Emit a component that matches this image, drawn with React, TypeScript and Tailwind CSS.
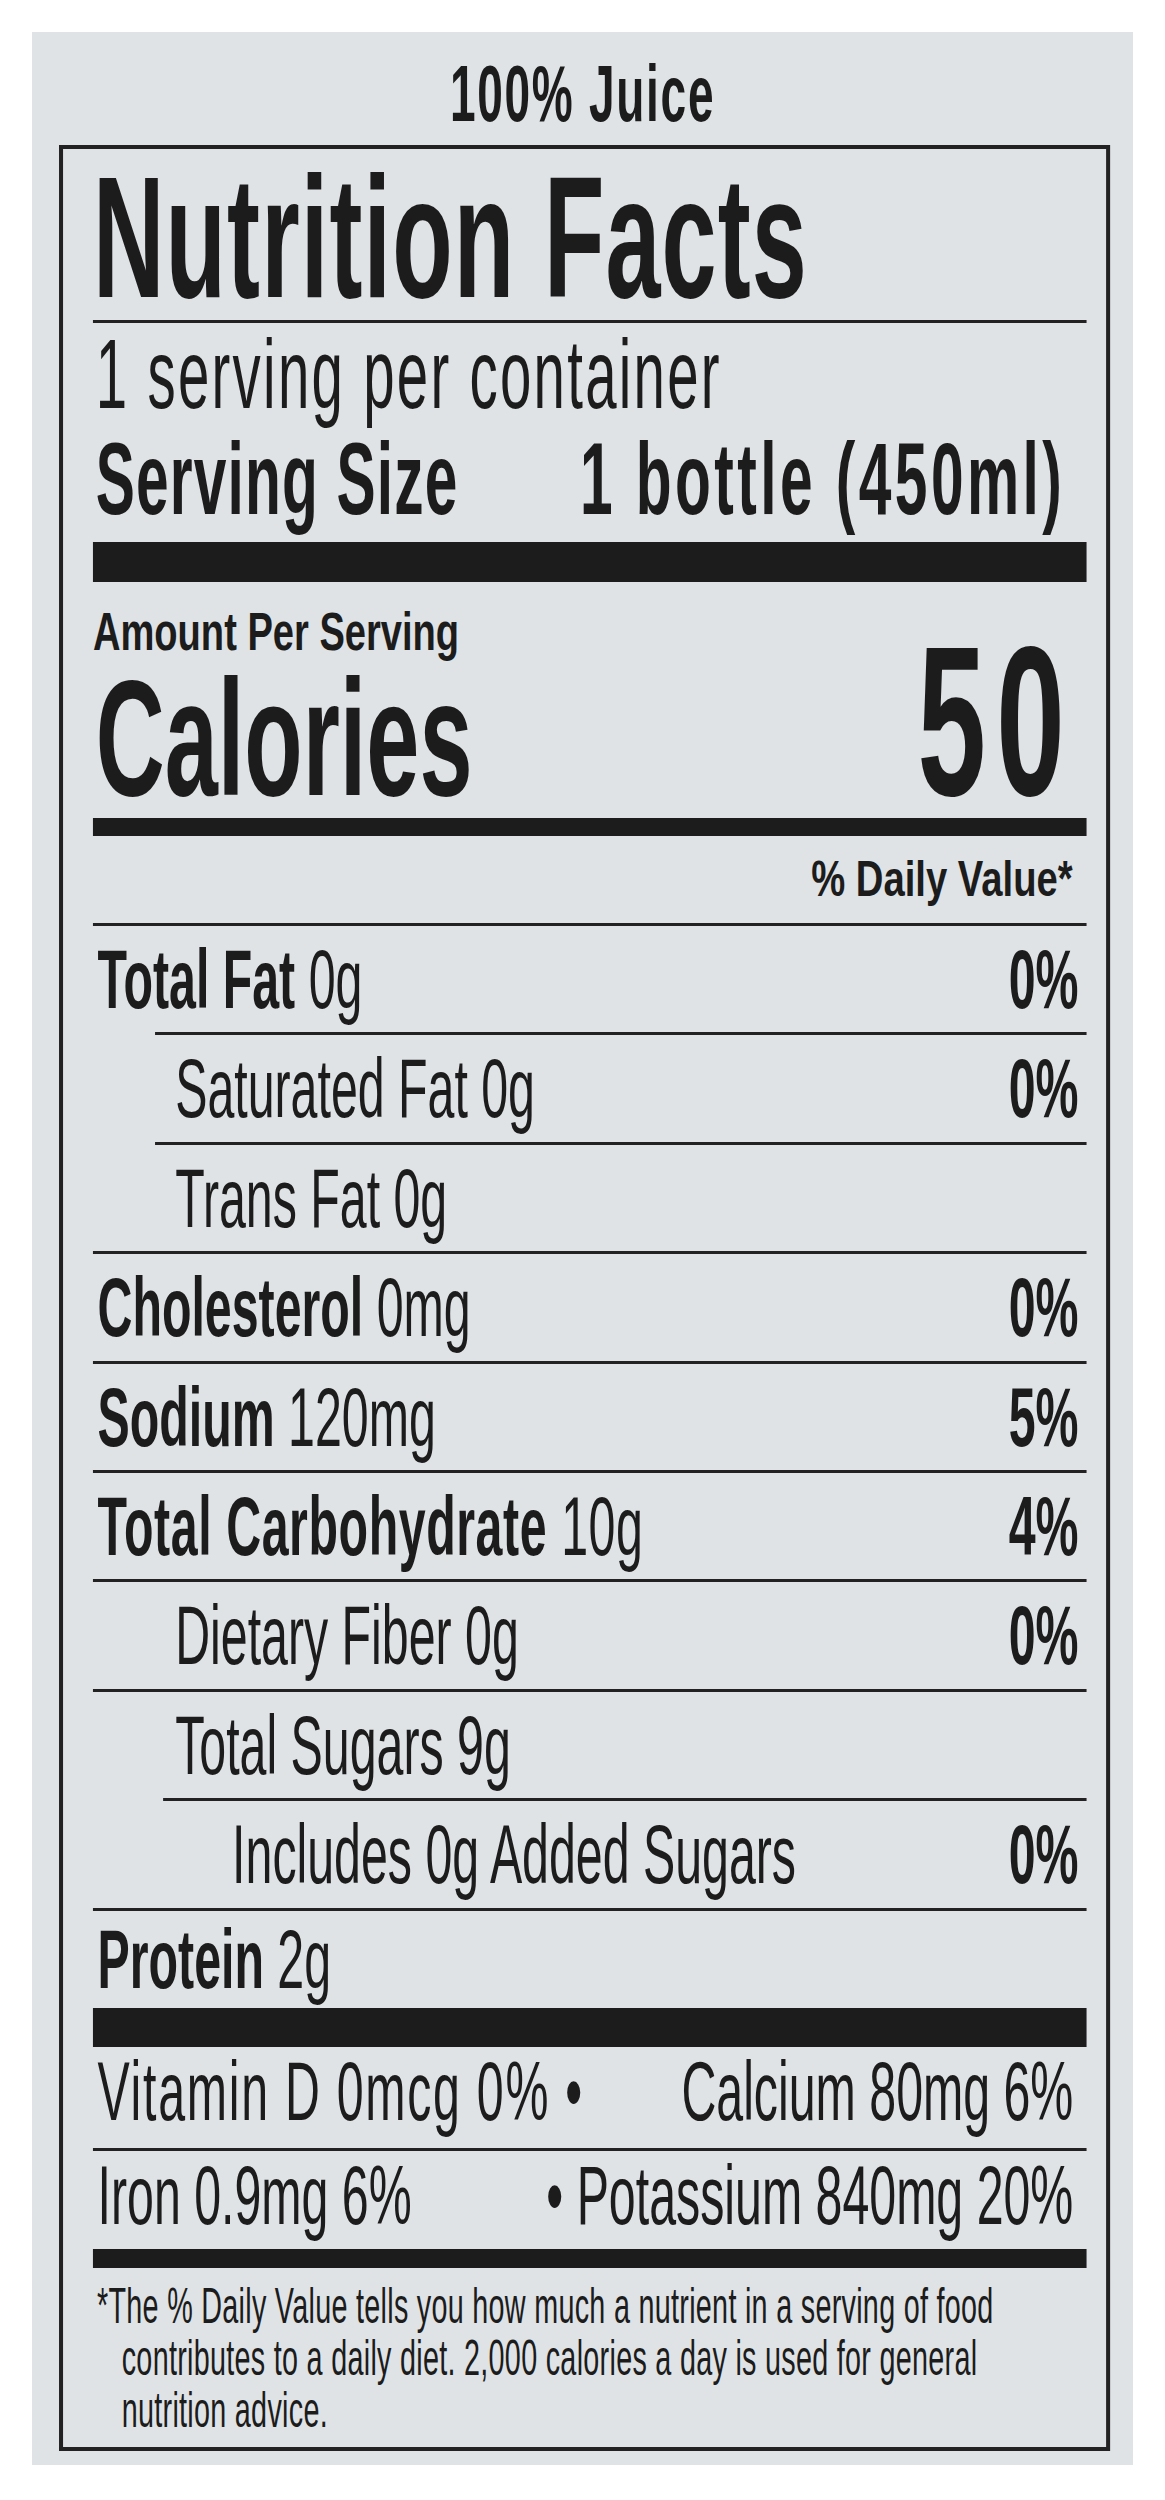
type Nutrient = {
  name: string;
  amount: string;
  dv?: string;
  bold?: boolean;
  ruleClass: string;
  textClass: string;
};

// horizontal values are in the un-squeezed space (x 0.575 on screen)
const nutrients: Nutrient[] = [
  { name: "Total Fat", amount: "0g", dv: "0%", bold: true, ruleClass: "", textClass: "pl-[8px]" },
  { name: "Saturated Fat", amount: "0g", dv: "0%", ruleClass: "ml-[108px]", textClass: "pl-[143px]" },
  { name: "Trans Fat", amount: "0g", ruleClass: "ml-[108px]", textClass: "pl-[143px]" },
  { name: "Cholesterol", amount: "0mg", dv: "0%", bold: true, ruleClass: "", textClass: "pl-[8px]" },
  { name: "Sodium", amount: "120mg", dv: "5%", bold: true, ruleClass: "", textClass: "pl-[8px]" },
  { name: "Total Carbohydrate", amount: "10g", dv: "4%", bold: true, ruleClass: "", textClass: "pl-[8px] tracking-[1px]" },
  { name: "Dietary Fiber", amount: "0g", dv: "0%", ruleClass: "", textClass: "pl-[143px]" },
  { name: "Total Sugars", amount: "9g", ruleClass: "", textClass: "pl-[143px]" },
  { name: "Includes 0g Added Sugars", amount: "", dv: "0%", ruleClass: "ml-[122px]", textClass: "pl-[242px]" },
];

function Rule({ className = "" }: { className?: string }) {
  return <div className={`h-[3px] bg-[#222222] ${className}`} />;
}

function NutrientRow({ n }: { n: Nutrient }) {
  return (
    <div>
      <Rule className={n.ruleClass} />
      <div
        className={`flex items-baseline justify-between whitespace-nowrap text-[84px] leading-[106.4px] ${n.textClass}`}
      >
        <span>
          {n.bold ? (
            <>
              <span className="font-bold">{n.name}</span> {n.amount}
            </>
          ) : (
            `${n.name} ${n.amount}`
          )}
        </span>
        {n.dv ? <span className="pr-[14px] font-bold tracking-normal">{n.dv}</span> : null}
      </div>
    </div>
  );
}

export default function App() {
  return (
    <div className="min-h-[2500px] bg-white px-[32px] pt-[32px]">
      <div className="w-[1101px] overflow-hidden bg-[#dfe3e6] text-[#1c1c1c]">
        {/* the label type is condensed: squeeze the whole panel horizontally */}
        <div className="w-[1915px] origin-top-left scale-x-[0.575] pt-[23px] pb-[14px] font-['Liberation_Sans',sans-serif]">
          <div className="text-center text-[80px] font-bold leading-[78px] tracking-[3px]">100% Juice</div>

          <div className="ml-[47px] mt-[12px] w-[1828px] border-x-[7px] border-y-[4px] border-[#222222] pl-[52px] pr-[34px] pb-[11px]">
            <h1 className="pt-[5px] text-[172px] font-bold leading-[166px] tracking-[2px] whitespace-nowrap">
              Nutrition Facts
            </h1>
            <Rule />
            <div className="pl-[5px] text-[98px] leading-[102px] tracking-[4px] whitespace-nowrap">
              1 serving per container
            </div>
            <div className="flex justify-between pl-[5px] pr-[37px] text-[102px] font-bold leading-[108px] whitespace-nowrap">
              <span className="tracking-[2px]">Serving Size</span>
              <span className="tracking-[6px]">1 bottle (450ml)</span>
            </div>
            <div className="mt-[9px] h-[40px] bg-[#1c1c1c]" />

            <div className="flex items-end justify-between whitespace-nowrap">
              <div className="flex flex-col">
                <span className="pt-[12px] text-[53px] font-bold leading-[76px]">
                  <span className="inline-block origin-left scale-x-[1.25]">Amount Per Serving</span>
                </span>
                <span className="pb-[12px] pl-[5px] text-[166px] font-bold leading-[136px]">
                  Calories
                </span>
              </div>
              <span className="pb-[22px] pr-[20px] text-[214px] font-bold leading-[150px] tracking-[18px]">
                50
              </span>
            </div>
            <div className="h-[18px] bg-[#1c1c1c]" />

            <div className="pr-[24px] text-right text-[50px] font-bold leading-[87px]">
              <span className="inline-block origin-right scale-x-[1.33]">% Daily Value*</span>
            </div>

            {nutrients.map((n) => (
              <NutrientRow key={n.name} n={n} />
            ))}

            <Rule />
            <div className="pl-[8px] text-[84px] leading-[97px] whitespace-nowrap">
              <span className="font-bold">Protein</span> 2g
            </div>
            <div className="h-[39px] bg-[#1c1c1c]" />

            <div className="flex justify-between pb-[13px] pl-[8px] pr-[23px] text-[84px] leading-[88px] whitespace-nowrap">
              <span className="tracking-[3px]">Vitamin D 0mcg 0% •</span>
              <span>Calcium 80mg 6%</span>
            </div>
            <Rule />
            <div className="flex justify-between pb-[10px] pl-[8px] pr-[23px] text-[84px] leading-[88px] whitespace-nowrap">
              <span>Iron 0.9mg 6%</span>
              <span>• Potassium 840mg 20%</span>
            </div>
            <div className="h-[19px] bg-[#1c1c1c]" />

            <p className="pt-[12px] pl-[50px] indent-[-43px] text-[50px] leading-[52px] tracking-[0.5px] whitespace-nowrap">
              *The % Daily Value tells you how much a nutrient in a serving of food
              <br />
              contributes to a daily diet. 2,000 calories a day is used for general
              <br />
              nutrition advice.
            </p>
          </div>
        </div>
      </div>
    </div>
  );
}
